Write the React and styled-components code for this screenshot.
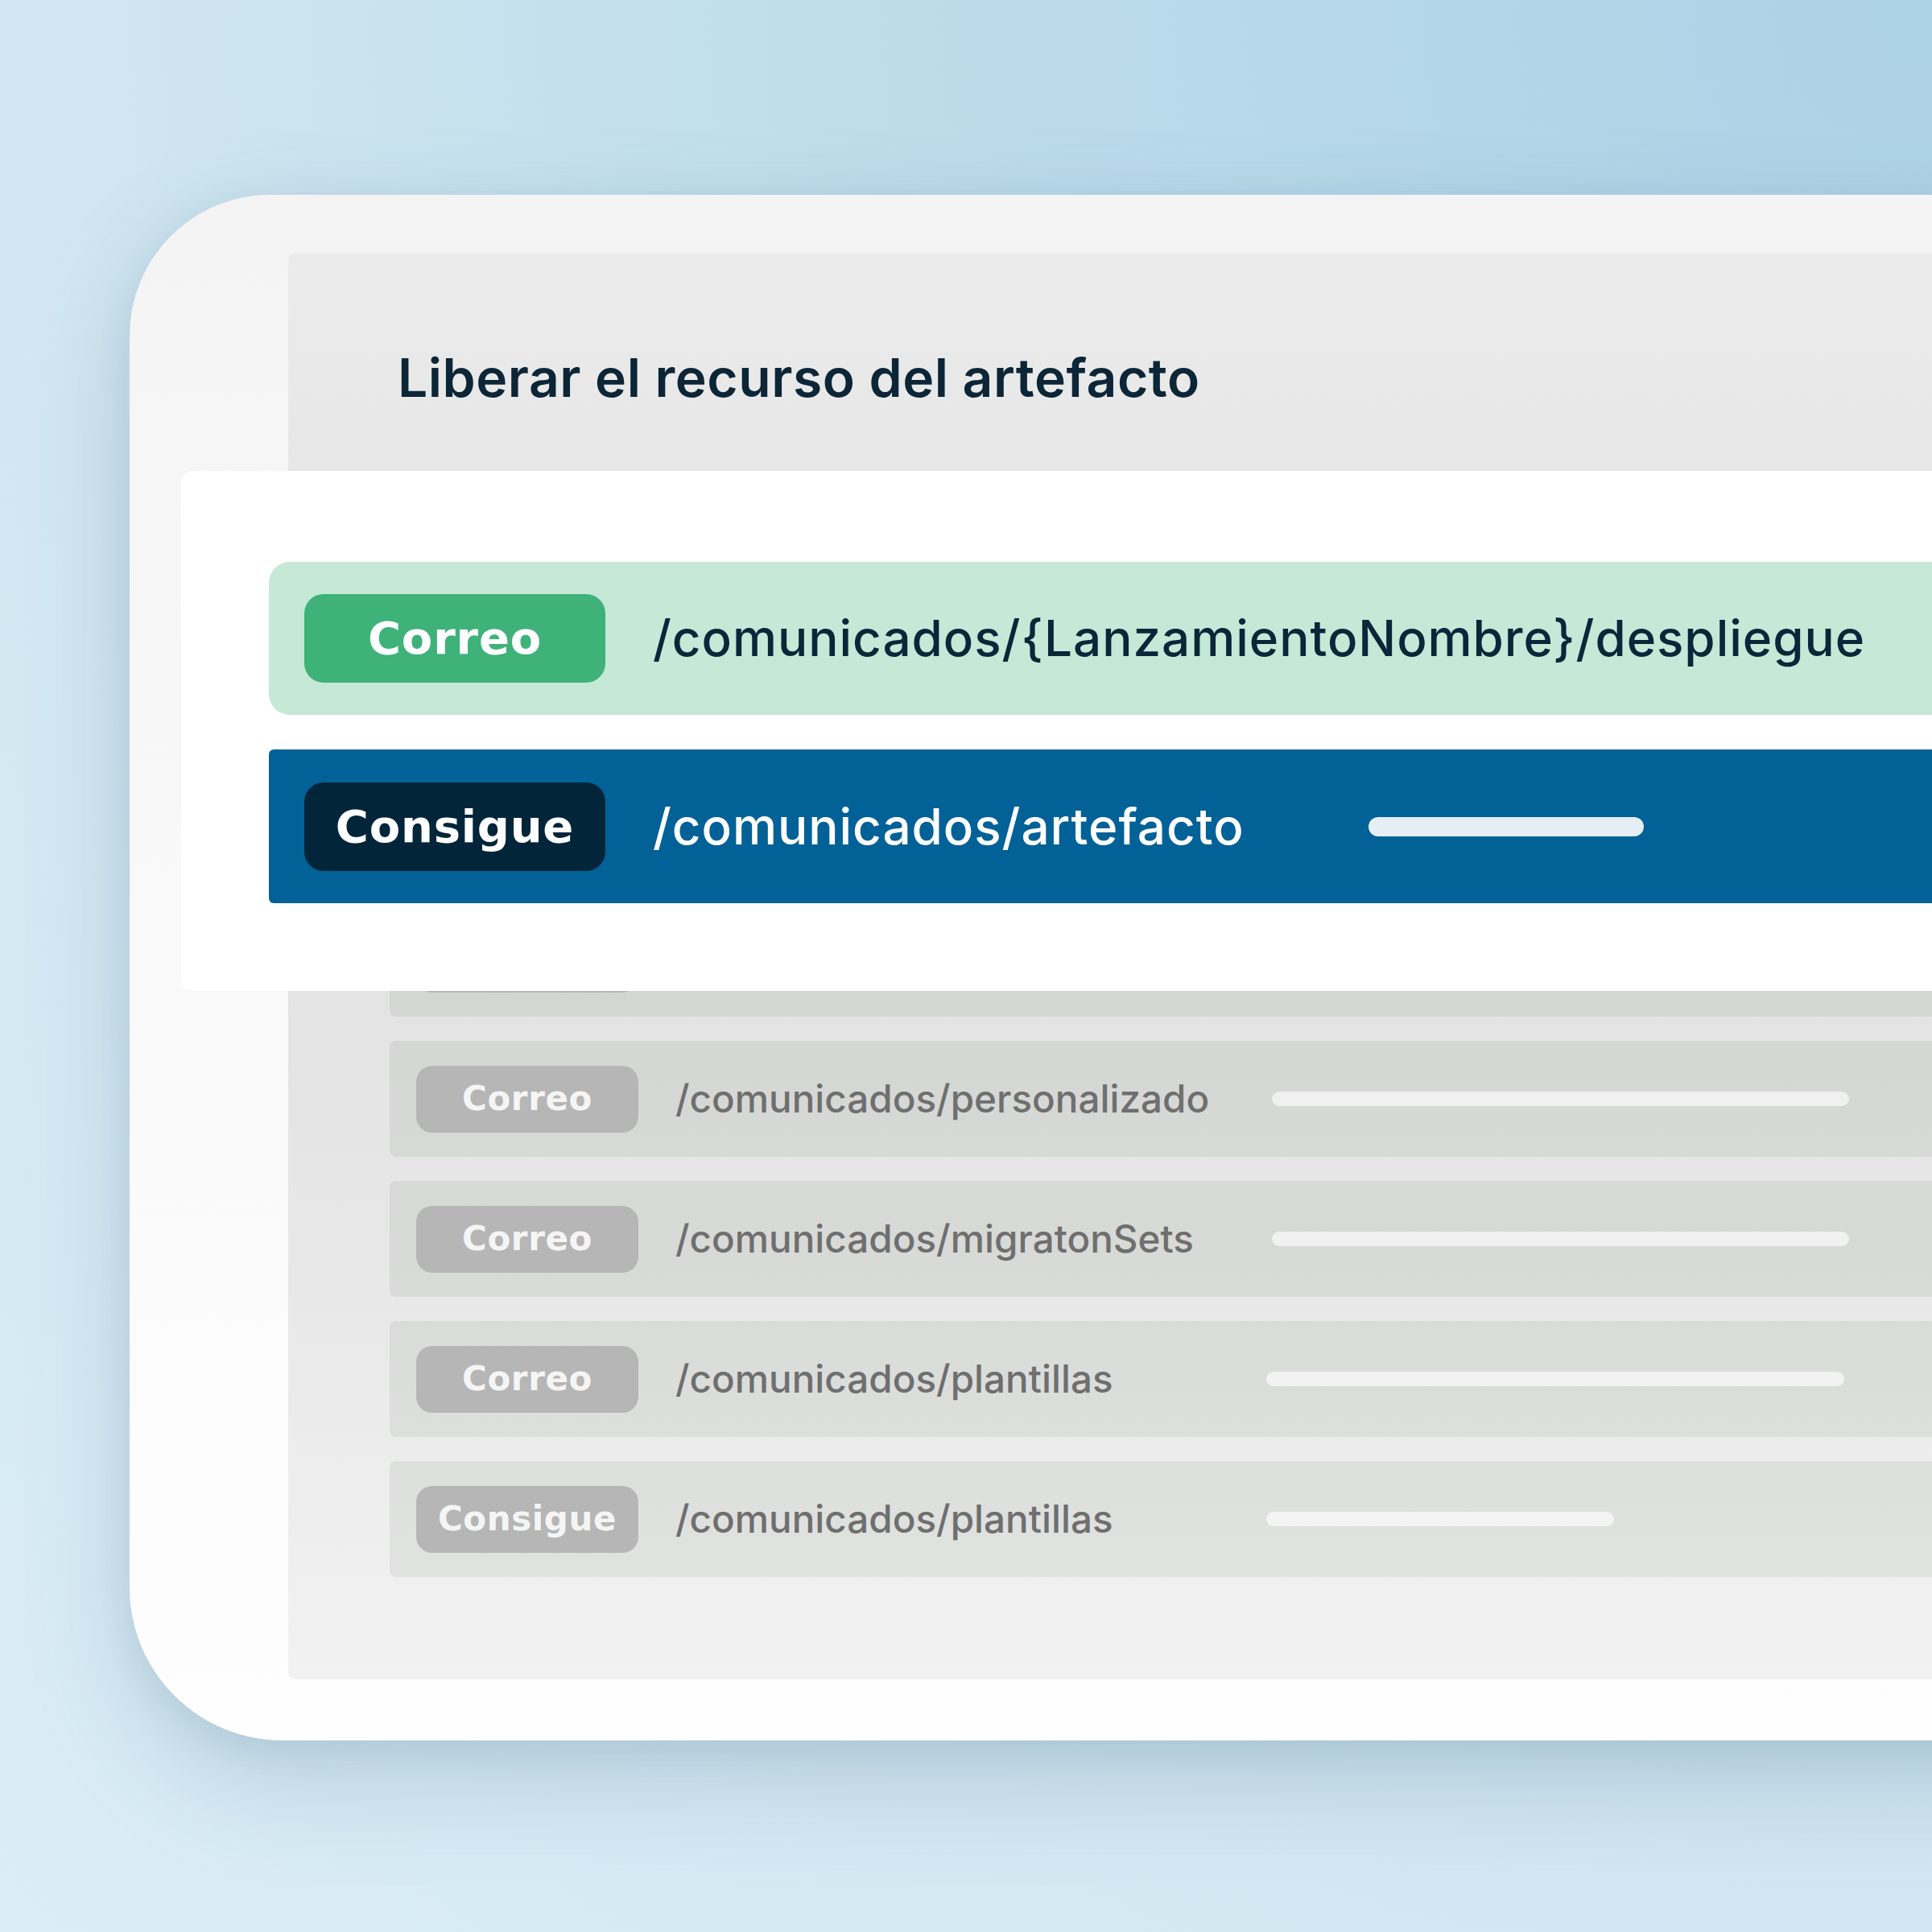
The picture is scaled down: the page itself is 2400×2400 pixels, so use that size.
import React from "react";
import styled, { createGlobalStyle } from "styled-components";

const GlobalStyle = createGlobalStyle`
  html, body { margin: 0; padding: 0; }
  body {
    width: 2400px;
    height: 2400px;
    overflow: hidden;
    font-family: Inter, "Noto Sans", sans-serif;
  }
`;

const Stage = styled.div`
  position: relative;
  width: 2400px;
  height: 2400px;
  overflow: hidden;
  box-sizing: border-box;
  padding: 242px 0 0 161px;
  background: radial-gradient(
    circle farthest-corner at 100% 0%,
    #acd2e6 0%,
    #bddcea 38%,
    #d2e7f1 70%,
    #dbeef7 100%
  );
`;

const Device = styled.div`
  box-sizing: border-box;
  width: 2500px;
  height: 1920px;
  padding: 73px 0 0 197px;
  border-radius: 175px 0 0 190px;
  background: linear-gradient(180deg, #f4f4f4 0%, #f9f9f9 50%, #fefefe 100%);
  box-shadow: 0 50px 130px rgba(70, 110, 135, 0.22), 0 10px 40px rgba(70, 110, 135, 0.1);
`;

const Screen = styled.div`
  box-sizing: border-box;
  height: 1771px;
  padding: 121px 0 0 126px;
  border-radius: 8px 0 0 8px;
  background: linear-gradient(
    180deg,
    #eaebea 0%,
    #e4e5e4 25%,
    #e1e2e1 45%,
    #e6e7e6 70%,
    #f1f2f1 100%
  );
`;

const Title = styled.h1`
  margin: 0 0 95px 10px;
  font-family: Inter, "Noto Sans", sans-serif;
  font-size: 66px;
  line-height: 66px;
  font-weight: 600;
  letter-spacing: 0.5px;
  color: #0c2537;
  white-space: nowrap;
`;

const List = styled.div`
  display: flex;
  flex-direction: column;
  gap: 30px;
`;

const GhostRow = styled.div`
  display: flex;
  align-items: center;
  box-sizing: border-box;
  height: 144px;
  padding-left: 33px;
  border-radius: 8px 0 0 8px;
  background: rgba(30, 40, 35, 0.065);
`;

const badgeTones = {
  green: { bg: "#3eb279", fg: "#ffffff" },
  navy: { bg: "#02253a", fg: "#ffffff" },
  gray: { bg: "#b6b6b6", fg: "#f5f5f5" },
};

const badgeSizes = {
  lg: { w: 374, h: 110, r: 24, fs: 56, ls: 0.8 },
  sm: { w: 276, h: 83, r: 20, fs: 42, ls: 0.6 },
};

const Badge = styled.span`
  flex: none;
  display: inline-flex;
  align-items: center;
  justify-content: center;
  width: ${(p) => badgeSizes[p.$size].w}px;
  height: ${(p) => badgeSizes[p.$size].h}px;
  border-radius: ${(p) => badgeSizes[p.$size].r}px;
  background: ${(p) => badgeTones[p.$tone].bg};
  color: ${(p) => badgeTones[p.$tone].fg};
  font-family: "DejaVu Sans", "Liberation Sans", sans-serif;
  font-weight: 700;
  font-size: ${(p) => badgeSizes[p.$size].fs}px;
  letter-spacing: ${(p) => badgeSizes[p.$size].ls}px;
  line-height: 1;
`;

const Path = styled.span`
  flex: none;
  box-sizing: border-box;
  width: ${(p) => (p.$width ? `${p.$width}px` : "auto")};
  margin-left: ${(p) => p.$gap}px;
  font-family: Inter, "Noto Sans", sans-serif;
  font-weight: 500;
  font-size: ${(p) => p.$fs}px;
  letter-spacing: ${(p) => p.$ls || 0}px;
  line-height: 1;
  color: ${(p) => p.$color};
  white-space: nowrap;
`;

const Bar = styled.span`
  flex: none;
  display: block;
  width: ${(p) => p.$w}px;
  height: ${(p) => p.$h}px;
  border-radius: 999px;
  background: ${(p) => p.$color};
`;

const Card = styled.div`
  position: absolute;
  left: 225px;
  top: 585px;
  width: 2300px;
  height: 646px;
  box-sizing: border-box;
  padding: 113px 0 0 109px;
  display: flex;
  flex-direction: column;
  gap: 43px;
  background: #ffffff;
  border-radius: 14px 0 0 14px;
`;

const CardRow = styled.div`
  display: flex;
  align-items: center;
  box-sizing: border-box;
  height: ${(p) => p.$h}px;
  padding-left: 44px;
  background: ${(p) => p.$bg};
  border-radius: ${(p) => p.$r}px 0 0 ${(p) => p.$r}px;
`;

/* rows hidden under the overlay card keep only their shapes */
const ghostRows = [
  { method: "", path: "", pw: 741, bw: 717 },
  { method: "", path: "", pw: 741, bw: 560 },
  { method: "", path: "", pw: 741, bw: 717 },
  { method: "", path: "", pw: 741, bw: 717 },
  { method: "Correo", path: "/comunicados/personalizado", pw: 741, bw: 717 },
  { method: "Correo", path: "/comunicados/migratonSets", pw: 741, bw: 717 },
  { method: "Correo", path: "/comunicados/plantillas", pw: 734, bw: 718 },
  { method: "Consigue", path: "/comunicados/plantillas", pw: 734, bw: 432 },
];

export default function App() {
  return (
    <>
      <GlobalStyle />
      <Stage>
        <Device>
          <Screen>
            <Title>Liberar el recurso del artefacto</Title>
            <List>
              {ghostRows.map((r, i) => (
                <GhostRow key={i}>
                  <Badge $tone="gray" $size="sm">
                    {r.method}
                  </Badge>
                  <Path $gap={46} $width={r.pw} $fs={47.6} $color="#6f6f6f">
                    {r.path}
                  </Path>
                  <Bar $w={r.bw} $h={18} $color="rgba(255,255,255,0.62)" />
                </GhostRow>
              ))}
            </List>
          </Screen>
        </Device>
        <Card>
          <CardRow $h={190} $bg="#c5e8d7" $r={26}>
            <Badge $tone="green" $size="lg">
              Correo
            </Badge>
            <Path $gap={59} $fs={62} $ls={0.95} $color="#0b2539">
              /comunicados/{"{"}LanzamientoNombre{"}"}/despliegue
            </Path>
          </CardRow>
          <CardRow $h={191} $bg="#026196" $r={6}>
            <Badge $tone="navy" $size="lg">
              Consigue
            </Badge>
            <Path $gap={59} $width={889} $fs={62} $ls={0.95} $color="#ffffff">
              /comunicados/artefacto
            </Path>
            <Bar $w={342} $h={24} $color="#e6eef5" />
          </CardRow>
        </Card>
      </Stage>
    </>
  );
}
